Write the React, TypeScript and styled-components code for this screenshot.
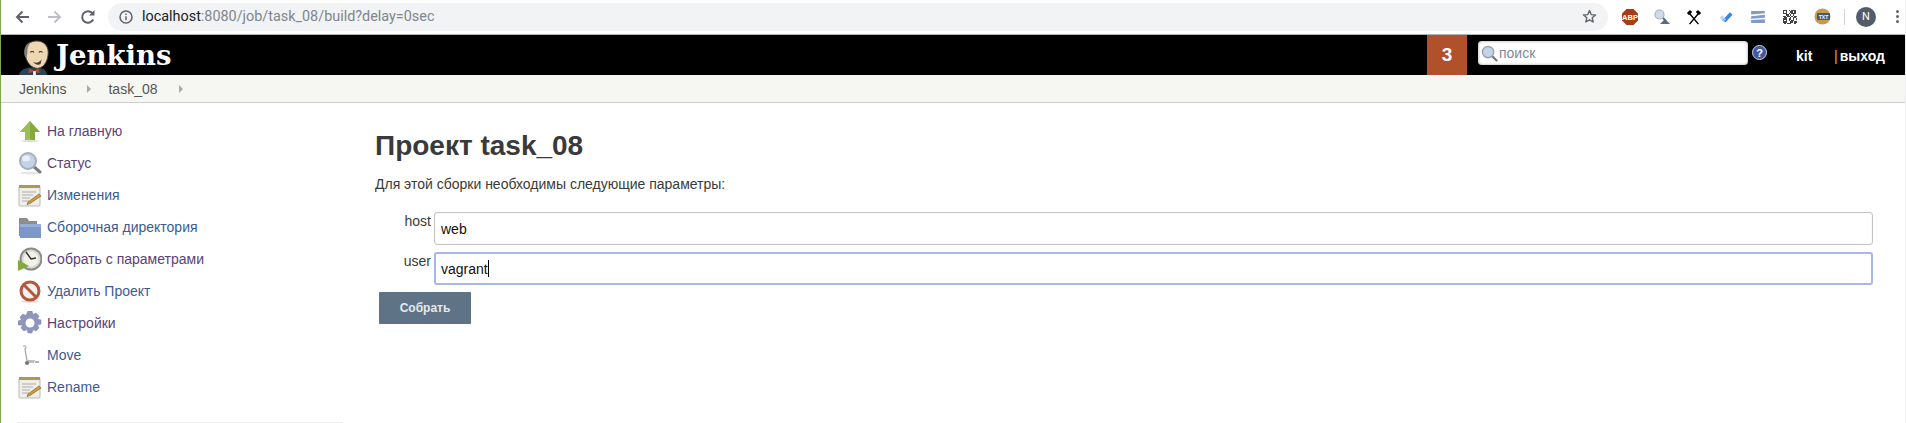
import React from "react";
import styled, { createGlobalStyle } from "styled-components";

const Global = createGlobalStyle`
  html, body { margin: 0; padding: 0; background: #fff; overflow: hidden; }
  body { font-family: "Liberation Sans", Arial, sans-serif; }
`;

const Page = styled.div`
  width: 1906px;
  height: 423px;
  box-sizing: border-box;
  border-left: 1px solid #7fa650;
  border-right: 1px solid #eeeeee;
  overflow: hidden;
  display: flex;
  flex-direction: column;
`;

/* Browser chrome */
const Chrome = styled.div`
  height: 35px;
  box-sizing: border-box;
  flex: none;
  display: flex;
  align-items: center;
  background: #fff;
  border-bottom: 1px solid #b5b5b5;
  padding-bottom: 1px;
`;
const NavButton = styled.div<{ $w: number }>`
  width: ${(p) => p.$w}px;
  flex: none;
  display: flex;
  justify-content: center;
  align-items: center;
`;
const Omnibox = styled.div`
  flex: none;
  width: 1500px;
  height: 28px;
  border-radius: 14px;
  background: #f1f3f4;
  display: flex;
  align-items: center;
  padding: 0 11px 0 11px;
  box-sizing: border-box;
`;
const Url = styled.div`
  margin-left: 9px;
  flex: 1;
  font-family: "Roboto", "Noto Sans", sans-serif;
  font-size: 14.4px;
  color: #80868b;
  b { font-weight: 400; color: #202124; }
`;
const ExtTray = styled.div`
  display: flex;
  align-items: center;
  margin-left: 6px;
`;
const Ext = styled.div`
  width: 32px;
  height: 24px;
  display: flex;
  align-items: center;
  justify-content: center;
`;
const TraySep = styled.div`
  width: 1px;
  height: 16px;
  background: #d0d2d4;
  margin: 0 11px 0 6px;
`;
const Avatar = styled.div`
  width: 20px;
  height: 20px;
  border-radius: 50%;
  background: #535c68;
  color: #fff;
  font: 400 11px "Roboto", sans-serif;
  display: flex;
  align-items: center;
  justify-content: center;
`;
const Dots = styled.div`
  margin-left: 20px;
  display: flex;
  flex-direction: column;
  gap: 2px;
  i { width: 3px; height: 3px; border-radius: 50%; background: #5f6368; display: block; }
`;

/* Jenkins header */
const Header = styled.div`
  height: 40px;
  flex: none;
  background: #000;
  display: flex;
  align-items: stretch;
`;
const Logo = styled.div`
  display: flex;
  align-items: flex-end;
  padding-left: 17px;
  flex: 1;
`;
const LogoText = styled.div`
  font-family: "DejaVu Serif", "Liberation Serif", serif;
  font-weight: 700;
  font-size: 27.5px;
  line-height: 40px;
  color: #fff;
  margin-left: 5px;
  align-self: center;
`;
const Count = styled.div`
  width: 40px;
  background: #b1512b;
  color: #fff;
  font-weight: 700;
  font-size: 19px;
  display: flex;
  align-items: center;
  justify-content: center;
`;
const SearchWrap = styled.div`
  margin-left: 11px;
  width: 270px;
  height: 24px;
  margin-top: 6px;
  background: #fff;
  border-radius: 4px;
  display: flex;
  align-items: center;
  padding-left: 3px;
  box-sizing: border-box;
  box-shadow: inset 0 0 3px #999;
`;
const SearchText = styled.span`
  font-size: 14px;
  color: #7f8a99;
  margin-left: 1px;
`;
const Help = styled.div`
  margin-left: 4px;
  margin-top: 10px;
  width: 15px;
  height: 15px;
`;
const User = styled.div`
  color: #fff;
  font-weight: 700;
  font-size: 14px;
  width: 38px;
  margin-left: 29px;
  padding-top: 13px;
  line-height: 16px;
`;
const Logout = styled.div`
  color: #fff;
  font-weight: 700;
  font-size: 14px;
  line-height: 16px;
  padding-top: 13px;
  width: 71px;
  span { color: #e8a33d; font-weight: 400; margin-right: 2px; }
`;

/* Breadcrumb */
const Crumbs = styled.div`
  height: 28px;
  box-sizing: border-box;
  flex: none;
  background: #f6f7f2;
  border-bottom: 1px solid #cfd0cc;
  display: flex;
  align-items: center;
  padding-left: 18px;
  font-size: 14px;
  color: #555;
`;
const CrumbArrow = styled.div`
  width: 0;
  height: 0;
  border-left: 4px solid #aaa;
  border-top: 4px solid transparent;
  border-bottom: 4px solid transparent;
  margin: 0 17px 0 21px;
`;

/* Main */
const Main = styled.div`
  flex: 1;
  display: flex;
  min-height: 0;
`;
const Side = styled.nav`
  width: 326px;
  margin-left: 16px;
  flex: none;
  padding-top: 12px;
`;
const SideItem = styled.div<{ $visited?: boolean }>`
  height: 32px;
  display: flex;
  align-items: center;
  font-size: 14px;
  color: ${(p) => (p.$visited ? "#5a4277" : "#3c5a94")};
`;
const SideIcon = styled.div`
  width: 24px;
  height: 24px;
  flex: none;
  margin: 0 5px 0 1px;
`;
const SideRule = styled.div`
  margin-top: 19px;
  height: 1px;
  background: #eeeeee;
`;
const Content = styled.div`
  flex: 1;
  padding: 26px 0 0 32px;
  min-width: 0;
`;
const Title = styled.h1`
  margin: 0;
  font-size: 28px;
  line-height: 34px;
  font-weight: 700;
  color: #3a3a3a;
`;
const Lead = styled.p`
  margin: 12px 0 0 0;
  font-size: 14px;
  line-height: 18px;
  color: #3a3a3a;
`;
const Form = styled.div`
  margin-top: 19px;
  display: flex;
  flex-direction: column;
  gap: 7px;
`;
const Row = styled.div`
  display: flex;
  align-items: flex-start;
  height: 33px;
`;
const Label = styled.div`
  width: 59px;
  padding-right: 3px;
  box-sizing: border-box;
  text-align: right;
  font-size: 14px;
  line-height: 18px;
  color: #3a3a3a;
`;
const Field = styled.div<{ $focus?: boolean }>`
  width: 1439px;
  height: 33px;
  box-sizing: border-box;
  border: ${(p) => (p.$focus ? "2px solid #a5b8ee" : "1px solid #c4c4c4")};
  box-shadow: ${(p) => (p.$focus ? "none" : "inset 0 0 1px #c4c4c4")};
  border-radius: 3px;
  display: flex;
  align-items: center;
  padding-left: ${(p) => (p.$focus ? 5 : 6)}px;
  font-size: 14px;
  color: #111;
  background: #fff;
`;
const Caret = styled.span`
  width: 1px;
  height: 17px;
  background: #000;
  display: inline-block;
`;
const Submit = styled.div`
  margin: 7px 0 0 4px;
  width: 92px;
  height: 32px;
  background: #5f7386;
  color: #e6e9ec;
  font-weight: 700;
  font-size: 12px;
  display: flex;
  align-items: center;
  justify-content: center;
  border-radius: 1px;
`;

const Back = () => (
  <svg width="16" height="16" viewBox="0 0 16 16"><path d="M15 8H3M8.500 2.500 3 8l5.500 5.500" fill="none" stroke="#5f6368" strokeWidth="2" /></svg>
);
const Forward = () => (
  <svg width="16" height="16" viewBox="0 0 16 16"><path d="M1 8h12M7.500 2.500 13 8l-5.500 5.500" fill="none" stroke="#bcc0c4" strokeWidth="2" /></svg>
);
const Reload = () => (
  <svg width="16" height="16" viewBox="0 0 16 16"><path d="M13.200 10.500A5.800 5.800 0 1 1 12.200 4" fill="none" stroke="#5f6368" strokeWidth="2" /><path d="M14.500 1v5.500H9z" fill="#5f6368" /></svg>
);
const Info = () => (
  <svg width="14" height="14" viewBox="0 0 14 14"><circle cx="7" cy="7" r="6" fill="none" stroke="#5f6368" strokeWidth="1.500" /><path d="M7 6.200v4M7 3.600v1.500" stroke="#5f6368" strokeWidth="1.500" /></svg>
);
const Star = () => (
  <svg width="15" height="15" viewBox="0 0 15 15"><path d="M7.500 1.600 9.200 5.600l4.300.4-3.300 2.800 1 4.200-3.700-2.200-3.700 2.200 1-4.200L1.500 6l4.300-.4z" fill="none" stroke="#5f6368" strokeWidth="1.400" strokeLinejoin="round" /></svg>
);
const Abp = () => (
  <svg width="18" height="18" viewBox="0 0 18 18">
    <path d="M5.500 1h7L17 5.500v7L12.500 17h-7L1 12.500v-7z" fill="#a83c14" />
    <text x="9" y="12" textAnchor="middle" fontFamily="Liberation Sans" fontWeight="700" fontSize="7.500" fill="#fff">ABP</text>
  </svg>
);
const Detective = () => (
  <svg width="18" height="18" viewBox="0 0 18 18">
    <circle cx="6.500" cy="6.500" r="4.500" fill="#cfdbe8" stroke="#9fb3c6" strokeWidth="1.200" />
    <path d="M10 10l3 3" stroke="#5b6c80" strokeWidth="2" />
    <path d="M7 16l5-5 5 5z" fill="#5a6a80" />
  </svg>
);
const Hammers = () => (
  <svg width="16" height="16" viewBox="0 0 18 18">
    <path d="M4 5l10 12M14 5 4 17" stroke="#000" strokeWidth="1.600" />
    <path d="M1 4.500 4.500 1 7 3.500 3.500 7zM17 4.500 13.500 1 11 3.500 14.500 7z" fill="#000" />
  </svg>
);
const Check = () => (
  <svg width="15" height="12" viewBox="0 0 16 14">
    <path d="M0 8l3-3 3 3-3 3z" fill="#b5dcf7" />
    <path d="M3 11l3-3 6-6.500 3 3L7 13z" fill="#3f7fe8" />
    <path d="M3 11l3-3 1.500 1.500L5 12.500z" fill="#90c0f5" />
  </svg>
);
const Stripes = () => (
  <svg width="16" height="12" viewBox="0 0 16 14">
    <path d="M0 0h16v2.500L0 4zM16 4.500v3.500L0 9V6zM0 10.500l16-1V14H0z" fill="#7f9bc9" />
  </svg>
);
const Qr = () => {
  const cells = ["1110101110","1010011010","1110101110","0011010100","1101101011","0110010110","1110110101","1010101100","1110011011","0101110010"];
  return (
    <svg width="14" height="14" viewBox="0 0 10 10" shapeRendering="crispEdges">
      {cells.map((r, y) => r.split("").map((c, x) => c === "1" ? <rect key={`${x}-${y}`} x={x} y={y} width="1" height="1" fill="#444" /> : null))}
    </svg>
  );
};
const Cookie = () => (
  <svg width="17" height="17" viewBox="0 0 17 17">
    <circle cx="8.500" cy="8.500" r="8" fill="#c99a4a" />
    <rect x="3" y="5" width="13" height="7" rx="1" fill="#3a5c8c" />
    <text x="9.500" y="10.500" textAnchor="middle" fontFamily="Liberation Sans" fontWeight="700" fontSize="5" fill="#fff">TXT</text>
  </svg>
);

const JenkinsHead = () => (
  <svg width="33" height="35" viewBox="0 0 33 37">
    <path d="M0 37c1-5 6-7 11-8h10c5 1 8 3 9 8z" fill="#2b4257" />
    <path d="M11 30l5 2.500L21 30l1 5-6-1.500L10 35z" fill="#b8472b" />
    <path d="M15 33h3v4h-3z" fill="#eee" />
    <path d="M6 14C6 5 12 1 19 1s12 5 12 12c0 7-3 16-11 17-7 0-12-6-14-16z" fill="#eed7b3" stroke="#4a3f35" strokeWidth="1" />
    <path d="M6 15C5 8 8 3 13 2 9 6 9 11 9 14l-1 5c-1-1-2-2-2-4z" fill="#7d7d7d" />
    <path d="M12 13c1-1 3-1 4 0M21 13c1-1 3-1 4 0" stroke="#3a2f27" strokeWidth="1.200" fill="none" />
    <path d="M15 23c3 2 7 1 9-3l-1 5c-2 2-6 1-8-2z" fill="#4a3a30" />
  </svg>
);

const ArrowUp = () => (
  <svg viewBox="0 0 24 24">
    <path d="M12 2 22 13h-5v8H7v-8H2z" fill="#86a93f" />
    <path d="M12 2 2 13h5v8h5z" fill="#9dbd57" />
    <ellipse cx="12" cy="22" rx="9" ry="1.200" fill="#ddd" />
  </svg>
);
const Search = () => (
  <svg viewBox="0 0 24 24">
    <ellipse cx="12" cy="22" rx="10" ry="1.500" fill="#e5e5e5" />
    <path d="M15 15l7 6" stroke="#7c7c7c" strokeWidth="3" strokeLinecap="round" />
    <circle cx="10" cy="10" r="8" fill="#c4d3ec" stroke="#a6aeb8" strokeWidth="2" />
    <ellipse cx="8" cy="7.500" rx="4" ry="3" fill="#eaf0fa" />
  </svg>
);
const Notepad = () => (
  <svg viewBox="0 0 24 24">
    <rect x="1" y="3" width="21" height="20" rx="1" fill="#eeeeea" stroke="#b9b9b4" />
    <rect x="1" y="2" width="21" height="3" fill="#a99a55" />
    <path d="M4 9h14M4 12h11M4 15h8M4 18h7" stroke="#b0b0a8" strokeWidth="1.200" />
    <path d="M10 19l11-8 2 2-11 7.500-3 1z" fill="#d29a3a" stroke="#7a5a20" strokeWidth=".6" />
  </svg>
);
const Folder = () => (
  <svg viewBox="0 0 24 24">
    <path d="M1 21V3h8l2 3h8v15z" fill="#8b8d8f" />
    <path d="M2 9h21v14H2z" fill="#7c97c9" />
    <path d="M2 9h21v3H2z" fill="#96aed8" />
  </svg>
);
const Clock = () => (
  <svg viewBox="0 0 24 24">
    <circle cx="13" cy="12" r="10.500" fill="#d9d9cd" stroke="#8a8a8a" strokeWidth="2" />
    <circle cx="13" cy="12" r="7.500" fill="#f2f2ea" />
    <path d="M8 5l5 7 5-1" stroke="#333" strokeWidth="1.500" fill="none" />
    <path d="M0 13l11 6-11 5z" fill="#86a93f" />
  </svg>
);
const NoSign = () => (
  <svg viewBox="0 0 24 24">
    <ellipse cx="12" cy="22.500" rx="9" ry="1.300" fill="#ddd" />
    <circle cx="12" cy="12" r="9" fill="#f3f1ed" stroke="#b5573c" strokeWidth="3" />
    <path d="M6 6l12 12" stroke="#b5573c" strokeWidth="3" />
  </svg>
);
const Gear = () => (
  <svg viewBox="0 0 24 24">
    <path d="M10 0h4l1 3.500 3-1.500 3 3-1.500 3 3.500 1v4l-3.500 1 1.500 3-3 3-3-1.500-1 3.500h-4l-1-3.500-3 1.500-3-3 1.500-3L0 14v-4l3.500-1L2 6l3-3 3 1.500z" fill="#8f96bd" stroke="#7a7fa3" strokeWidth=".5" />
    <circle cx="12" cy="12" r="4.500" fill="#fff" />
  </svg>
);
const Trolley = () => (
  <svg viewBox="0 0 24 24">
    <path d="M6 3l2 1-1 2 2 12" stroke="#a0a0a0" strokeWidth="1.200" fill="none" />
    <path d="M5 2h3v2H5z" fill="#ccc" />
    <path d="M9 17h8l-1 3H9z" fill="#bdbdbd" />
    <circle cx="9" cy="20" r="2" fill="#777" />
    <path d="M17 19h4" stroke="#666" strokeWidth="1" />
  </svg>
);
const SearchSmall = () => (
  <svg width="17" height="17" viewBox="0 0 24 24">
    <path d="M15 15l7 7" stroke="#777" strokeWidth="3" strokeLinecap="round" />
    <circle cx="10" cy="10" r="8" fill="#c4d3ec" stroke="#9aa2ac" strokeWidth="2" />
  </svg>
);
const HelpIcon = () => (
  <svg width="15" height="15" viewBox="0 0 15 15">
    <circle cx="7.500" cy="7.500" r="7" fill="#3e5a9c" stroke="#cfd6e8" strokeWidth="1" />
    <text x="7.500" y="11.500" textAnchor="middle" fontFamily="Liberation Sans" fontWeight="700" fontSize="11" fill="#fff">?</text>
  </svg>
);

const items: [React.ComponentType, string, boolean][] = [
  [ArrowUp, "На главную", true],
  [Search, "Статус", true],
  [Notepad, "Изменения", false],
  [Folder, "Сборочная директория", false],
  [Clock, "Собрать с параметрами", true],
  [NoSign, "Удалить Проект", false],
  [Gear, "Настройки", true],
  [Trolley, "Move", false],
  [Notepad, "Rename", false],
];

export default function App() {
  return (
    <Page>
      <Global />
      <Chrome>
        <NavButton $w={42}><Back /></NavButton>
        <NavButton $w={24}><Forward /></NavButton>
        <NavButton $w={41}><Reload /></NavButton>
        <Omnibox>
          <Info />
          <Url><b>localhost</b>:8080/job/task_08/build?delay=0sec</Url>
          <Star />
        </Omnibox>
        <ExtTray>
          <Ext><Abp /></Ext>
          <Ext><Detective /></Ext>
          <Ext><Hammers /></Ext>
          <Ext><Check /></Ext>
          <Ext><Stripes /></Ext>
          <Ext><Qr /></Ext>
          <Ext><Cookie /></Ext>
          <TraySep />
          <Avatar>N</Avatar>
          <Dots><i /><i /><i /></Dots>
        </ExtTray>
      </Chrome>
      <Header>
        <Logo>
          <JenkinsHead />
          <LogoText>Jenkins</LogoText>
        </Logo>
        <Count>3</Count>
        <SearchWrap>
          <SearchSmall />
          <SearchText>поиск</SearchText>
        </SearchWrap>
        <Help><HelpIcon /></Help>
        <User>kit</User>
        <Logout><span>|</span>выход</Logout>
      </Header>
      <Crumbs>
        Jenkins<CrumbArrow />task_08<CrumbArrow />
      </Crumbs>
      <Main>
        <Side>
          {items.map(([Icon, label, visited]) => (
            <SideItem key={label} $visited={visited}>
              <SideIcon><Icon /></SideIcon>
              {label}
            </SideItem>
          ))}
          <SideRule />
        </Side>
        <Content>
          <Title>Проект task_08</Title>
          <Lead>Для этой сборки необходимы следующие параметры:</Lead>
          <Form>
            <Row>
              <Label>host</Label>
              <Field>web</Field>
            </Row>
            <Row>
              <Label>user</Label>
              <Field $focus>vagrant<Caret /></Field>
            </Row>
          </Form>
          <Submit>Собрать</Submit>
        </Content>
      </Main>
    </Page>
  );
}
